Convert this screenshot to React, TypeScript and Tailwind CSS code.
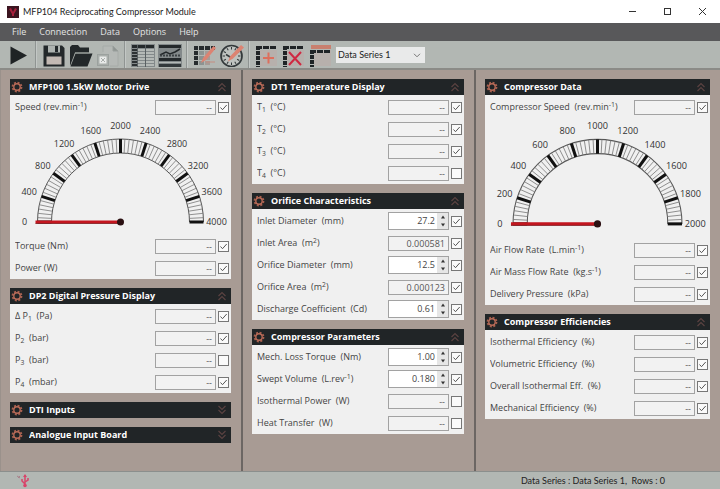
import { useId, useState } from "react";
import type { ReactNode } from "react";

const menuItems = ["File", "Connection", "Data", "Options", "Help"];

/* ---------- Toolbar icons ---------- */

function PlayIcon() {
  return (
    <svg viewBox="0 0 24 24" className="size-6">
      <path d="M3.500 3.500 20 12.500 3.500 21.500Z" fill="#1f2325" />
    </svg>
  );
}

function SaveIcon() {
  return (
    <svg viewBox="0 0 24 24" className="size-6">
      <path d="M1.500 2.500H20L22.500 5V23.500H1.500Z" fill="#23282a" />
      <rect x="6" y="2.500" width="12" height="7" fill="#aeb3b0" />
      <rect x="13" y="3" width="3" height="6" fill="#23282a" />
      <rect x="4.500" y="13.500" width="15" height="8" fill="#c3b9b3" />
    </svg>
  );
}

function OpenIcon() {
  return (
    <svg viewBox="0 0 24 24" className="size-6">
      <path d="M1 23V4L3 2H9L11 4.500H20V9.500H6Z" fill="#23282a" />
      <path d="M6.500 10.500H23.500L18.500 23.500H1.500Z" fill="#23282a" />
      <path d="M6 10H21" stroke="#9da3a0" strokeWidth="0.8" />
    </svg>
  );
}

function CloseFileIcon() {
  return (
    <svg viewBox="0 0 24 24" className="size-6">
      <path d="M7 9V3H17L22 8V23H14" fill="#b5b9b6" stroke="#a6aba8" />
      <path d="M17 3V8H22" fill="#8f9592" stroke="#989e9b" />
      <rect x="1.500" y="11.500" width="11" height="11" fill="#a9aeab" stroke="#9ba19e" />
      <rect x="3.500" y="13.500" width="7" height="7" fill="#e9ebea" />
      <path d="M5 15 9 19M9 15 5 19" stroke="#a8adaa" />
    </svg>
  );
}

function TableIcon() {
  return (
    <svg viewBox="0 0 24 24" className="size-6">
      <rect y="1" width="24" height="23" fill="#83898a" />
      <rect x="1" y="2" width="22" height="3" fill="#24292b" />
      {[6, 9, 12, 15, 18, 21].map((y) => (
        <g key={y}>
          <rect x="1" y={y} width="5" height="2" fill="#2c3133" />
          <rect x="7" y={y} width="7" height="2" fill="#b4b9b6" />
          <rect x="15" y={y} width="8" height="2" fill="#b4b9b6" />
        </g>
      ))}
      <path d="M6.500 2V24M14.500 2V24" stroke="#596062" />
    </svg>
  );
}

function ChartTableIcon() {
  return (
    <svg viewBox="0 0 24 24" className="size-6">
      <rect y="1" width="24" height="23" fill="#83898a" />
      <rect x="1" y="2" width="22" height="3" fill="#24292b" />
      <path d="M2 12 8 9 12 11 17 9 22 6" stroke="#24292b" strokeWidth="1.500" fill="none" />
      <path d="M2 12.500H22" stroke="#3c4244" strokeWidth="2" strokeDasharray="2 1" />
      <rect x="1" y="15" width="22" height="3" fill="#24292b" />
      <rect x="1" y="19" width="22" height="1" fill="#b4b9b6" />
      <rect x="1" y="21" width="22" height="3" fill="#33393b" />
    </svg>
  );
}

function EditTableIcon() {
  return (
    <svg viewBox="0 0 24 24" className="size-6">
      {[3, 8, 13, 18].map((y) => (
        <g key={y} fill="#262b2d">
          <rect x="1" y={y} width="4" height="4" />
          <rect x="6" y={y} width="5" height="4" fill={y === 3 ? "#262b2d" : "#8d9391"} />
          <rect x="12" y={y} width="5" height="4" fill={y === 3 ? "#262b2d" : "#a59b96"} />
        </g>
      ))}
      <rect x="18" y="3" width="4" height="4" fill="#262b2d" />
      <path d="M20.500 3 23 5 13 17 8 20 10 15Z" fill="#dc8372" />
      <path d="M13 19H22" stroke="#c68d80" />
    </svg>
  );
}

function ClockIcon() {
  return (
    <svg viewBox="0 0 26 24" className="h-6 w-[26px]">
      <circle cx="12.500" cy="13" r="10.500" fill="#bec2bf" stroke="#33393b" strokeWidth="1.700" />
      {[0, 30, 60, 90, 120, 150, 180, 210, 240, 270, 300, 330].map((a) => (
        <path key={a} d="M12.500 4V6.500" stroke="#33393b" transform={`rotate(${a} 12.500 13)`} />
      ))}
      <path d="M7 11.500 12 14.500" stroke="#33393b" strokeWidth="1.500" />
      <path d="M22 2 25 4.500 14 15.500 9 18.500 11 13.500Z" fill="#dc8372" />
    </svg>
  );
}

function SeriesFrame({ top = 3, children }: { top?: number; children?: ReactNode }) {
  return (
    <svg viewBox="0 0 24 24" className="size-6">
      <rect x="5" y="7" width="17" height="16" fill="#b7b0ac" />
      <path d={`M1 ${top + 1.5}H22`} stroke="#1f2426" strokeWidth="3" strokeDasharray="6 1" />
      <path d={`M3 ${top}V24`} stroke="#1f2426" strokeWidth="4" strokeDasharray="4 1" />
      {children}
    </svg>
  );
}

/* ---------- Small parts ---------- */

function GearIcon() {
  return (
    <svg viewBox="0 0 12 12" className="size-3">
      <circle cx="6" cy="6" r="4.500" fill="none" stroke="#a8604f" strokeWidth="1.800" strokeDasharray="2 1.530" />
      <circle cx="6" cy="6" r="3.200" fill="none" stroke="#b96b58" strokeWidth="1.400" />
    </svg>
  );
}

function Check({ label, on }: { label: string; on: boolean }) {
  const [checked, setChecked] = useState(on);

  return (
    <span className="relative flex size-[11px] shrink-0">
      <input
        type="checkbox"
        aria-label={label}
        checked={checked}
        onChange={() => setChecked(!checked)}
        className="size-[11px] appearance-none border border-[#777] bg-[#fafafa]"
      />
      {checked && (
        <svg viewBox="0 0 11 11" className="pointer-events-none absolute inset-0 size-[11px]">
          <path d="M2.500 5.500 4.500 7.700 8.700 3" fill="none" stroke="#555" />
        </svg>
      )}
    </span>
  );
}

interface RowProps {
  label: ReactNode;
  name: string;
  value?: string;
  on?: boolean;
  step?: number;
}

function Row({ label, name, value = "--", on = true, step }: RowProps) {
  const id = useId();
  const [text, setText] = useState(value);

  // Keeps the number of decimals of the initial value
  const change = (direction: number) => {
    const decimals = value.split(".")[1]?.length ?? 0;
    setText((Number(text) + direction * (step ?? 0)).toFixed(decimals));
  };

  return (
    <div className="flex h-[22px] items-center gap-0.5 pr-0.5 pl-[5px]">
      <label htmlFor={id} className="flex-1 truncate leading-5 text-[#444]">
        {label}
      </label>
      {step ? (
        <div className="flex h-[18px] w-[61px] border border-[#a2a2a2] bg-white">
          <input
            id={id}
            value={text}
            onChange={(e) => setText(e.target.value)}
            className="min-w-0 flex-1 bg-transparent pr-0.5 text-right text-[#444] outline-none"
          />
          <div className="flex w-[11px] flex-col bg-[#e6e6e6]">
            <button aria-label={`Increase ${name}`} onClick={() => change(1)} className="flex flex-1 items-center justify-center">
              <svg viewBox="0 0 6 4" className="h-1 w-1.5">
                <path d="M3 .5 5 3.500H1Z" fill="#333" />
              </svg>
            </button>
            <button aria-label={`Decrease ${name}`} onClick={() => change(-1)} className="flex flex-1 items-center justify-center">
              <svg viewBox="0 0 6 4" className="h-1 w-1.5">
                <path d="M3 3.500 5 .5H1Z" fill="#333" />
              </svg>
            </button>
          </div>
        </div>
      ) : (
        <input
          id={id}
          readOnly
          value={text}
          className="h-[15px] w-[61px] border border-[#a2a2a2] bg-[#f2f2f2] pr-[3px] text-right text-[#555] outline-none"
        />
      )}
      <Check label={`Log ${name}`} on={on} />
    </div>
  );
}

function Panel({ title, defaultOpen = true, children }: { title: string; defaultOpen?: boolean; children?: ReactNode }) {
  const [open, setOpen] = useState(defaultOpen);

  return (
    <section>
      <button
        onClick={() => setOpen(!open)}
        aria-expanded={open}
        className="flex h-4 w-full items-center gap-1.5 bg-[#212527] pr-1 pl-px text-left font-bold text-white"
      >
        <GearIcon />
        <span className="flex-1 truncate">{title}</span>
        <svg viewBox="0 0 10 10" className={open ? "size-2.5" : "size-2.5 rotate-180"}>
          <path d="M1.500 5 5 1.500 8.500 5M1.500 9 5 5.500 8.500 9" fill="none" stroke="#5a4241" strokeWidth="1.200" />
        </svg>
      </button>
      {open && children && <div className="bg-[#f0f0f0] pt-px">{children}</div>}
    </section>
  );
}

// Half circle dial, zero on the left and full scale on the right
function Gauge({ max }: { max: number }) {
  const cx = 110.5;
  const cy = 104;
  const outer = 83;
  const inner = 69;
  const point = (r: number, part: number) => {
    const a = Math.PI * (1 - part);
    return [cx + r * Math.cos(a), cy - r * Math.sin(a)];
  };
  const ticks = Array.from({ length: 61 }, (_, i) => i);
  const labels = Array.from({ length: 11 }, (_, i) => i);

  return (
    <svg viewBox="0 0 221 117" className="block h-auto w-full">
      <path d={`M${cx - outer} ${cy}A${outer} ${outer} 0 0 1 ${cx + outer} ${cy}`} fill="none" stroke="#555" />
      <path d={`M${cx - inner} ${cy}A${inner} ${inner} 0 0 1 ${cx + inner} ${cy}`} fill="none" stroke="#555" />
      {ticks.map((i) => {
        const [x1, y1] = point(outer, i / 60);
        const [x2, y2] = point(inner, i / 60);
        const major = i % 6 === 0;
        return (
          <line key={i} x1={x1} y1={y1} x2={x2} y2={y2} stroke={major ? "#111" : "#777"} strokeWidth={major ? 3 : 0.8} />
        );
      })}
      {labels.map((i) => {
        const [x, y] = point(96, i / 10);
        return (
          <text key={i} x={x} y={y + 3} textAnchor="middle" fontSize="9" fill="#333">
            {(max / 10) * i}
          </text>
        );
      })}
      <line x1={cx - outer - 2} y1={cy} x2={cx} y2={cy} stroke="#c4161f" strokeWidth="3" />
      <line x1={cx - outer - 2} y1={cy + 1.5} x2={cx} y2={cy + 1.5} stroke="#7d1a20" strokeWidth="0.8" />
      <circle cx={cx} cy={cy} r="3.500" fill="#2b1012" />
    </svg>
  );
}

const perMinute = <sup className="text-[7px]">-1</sup>;

export default function App() {
  const [series, setSeries] = useState("Data Series 1");

  const toolGroups = [
    [{ name: "Start", icon: <PlayIcon /> }],
    [
      { name: "Save", icon: <SaveIcon /> },
      { name: "Open", icon: <OpenIcon /> },
      { name: "Close file", icon: <CloseFileIcon /> },
    ],
    [
      { name: "Table", icon: <TableIcon /> },
      { name: "Chart", icon: <ChartTableIcon /> },
    ],
    [
      { name: "Record row", icon: <EditTableIcon /> },
      { name: "Timed recording", icon: <ClockIcon /> },
    ],
    [
      {
        name: "Add series",
        icon: (
          <SeriesFrame>
            <path d="M8 15H19M13.500 9.500V20.500" stroke="#dd6f5d" strokeWidth="2" />
          </SeriesFrame>
        ),
      },
      {
        name: "Delete series",
        icon: (
          <SeriesFrame>
            <path d="M7 9 19 22M19 9 7 22" stroke="#cf2942" strokeWidth="2" />
          </SeriesFrame>
        ),
      },
      {
        name: "Rename series",
        icon: (
          <SeriesFrame top={7}>
            <rect x="2" y="2" width="20" height="4" fill="#c9806f" />
          </SeriesFrame>
        ),
      },
    ],
  ];

  return (
    <div className="flex min-h-screen flex-col bg-[#a89b94] font-['Open_Sans','Noto_Sans',sans-serif] text-[9px]">
      <header className="flex h-[23px] items-center bg-white pr-[13px] pl-[7px] font-['Lato','Open_Sans',sans-serif] text-[#222]">
        <svg viewBox="0 0 12 12" className="size-3">
          <rect width="12" height="12" fill="#3b1520" />
          <path d="M2 3 4 2 6 6 8 2 10 3 7 8V10H5V8Z" fill="#a51f3b" />
        </svg>
        <h1 className="flex-1 pl-1">MFP104 Reciprocating Compressor Module</h1>
        <div className="flex gap-[26px]">
          <button aria-label="Minimize">
            <svg viewBox="0 0 9 9" className="size-[9px]">
              <path d="M1 4.500H8" stroke="#333" />
            </svg>
          </button>
          <button aria-label="Maximize">
            <svg viewBox="0 0 9 9" className="size-[9px]">
              <rect x="1.500" y="1.500" width="6" height="6" fill="none" stroke="#333" />
            </svg>
          </button>
          <button aria-label="Close">
            <svg viewBox="0 0 9 9" className="size-[9px]">
              <path d="M1 1 8 8M8 1 1 8" stroke="#333" />
            </svg>
          </button>
        </div>
      </header>

      <nav className="flex h-[18px] items-center gap-[13px] bg-[#58585a] pl-3 text-[#e4e4e4]">
        {menuItems.map((item) => (
          <button key={item}>{item}</button>
        ))}
      </nav>

      <div className="flex h-[29px] items-center border-b-2 border-[#8b8b87] bg-[#b2b7b3] pl-[5px]">
        {toolGroups.map((group, i) => (
          <div key={i} className="flex items-center">
            {i > 0 && <div className="mx-[3px] h-[27px] w-0.5 border-l border-[#8f9492] bg-[#c3c7c5]" />}
            {group.map((tool) => (
              <button key={tool.name} aria-label={tool.name} className="flex w-[27px] justify-center">
                {tool.icon}
              </button>
            ))}
          </div>
        ))}
        <div className="relative ml-0.5">
          <select
            aria-label="Data series"
            value={series}
            onChange={(e) => setSeries(e.target.value)}
            className="block h-4 w-[89px] appearance-none bg-[#e9eaea] pl-0.5 font-['Lato','Open_Sans',sans-serif] text-[#222] outline-none"
          >
            <option>Data Series 1</option>
          </select>
          <svg viewBox="0 0 8 5" className="pointer-events-none absolute top-1.5 right-1 h-[5px] w-2">
            <path d="M1 .8 4 3.800 7 .8" fill="none" stroke="#777" />
          </svg>
        </div>
      </div>

      <main className="grid flex-1 grid-cols-[240fr_235fr_244fr] border-l border-[#9a918b]">
        <div className="flex min-w-0 flex-col gap-[9px] pt-[9px] pr-2.5 pl-[9px]">
          <Panel title="MFP100 1.5kW Motor Drive">
            <Row name="speed" label={<>Speed (rev.min{perMinute})</>} />
            <Gauge max={4000} />
            <Row name="torque" label="Torque (Nm)" />
            <Row name="power" label="Power (W)" />
          </Panel>
          <Panel title="DP2 Digital Pressure Display">
            <Row name="P1" label={<>Δ P<sub>1</sub>&nbsp; (Pa)</>} />
            <Row name="P2" label={<>P<sub>2</sub>&nbsp; (bar)</>} />
            <Row name="P3" label={<>P<sub>3</sub>&nbsp; (bar)</>} on={false} />
            <Row name="P4" label={<>P<sub>4</sub>&nbsp; (mbar)</>} />
          </Panel>
          <Panel title="DTI Inputs" defaultOpen={false} />
          <Panel title="Analogue Input Board" defaultOpen={false} />
        </div>

        <div className="flex min-w-0 flex-col gap-[9px] border-x-2 border-[#6c6663] pt-[9px] pr-2.5 pl-[9px]">
          <Panel title="DT1 Temperature Display">
            <Row name="T1" label={<>T<sub>1</sub>&nbsp; (°C)</>} />
            <Row name="T2" label={<>T<sub>2</sub>&nbsp; (°C)</>} />
            <Row name="T3" label={<>T<sub>3</sub>&nbsp; (°C)</>} />
            <Row name="T4" label={<>T<sub>4</sub>&nbsp; (°C)</>} on={false} />
          </Panel>
          <Panel title="Orifice Characteristics">
            <Row name="inlet diameter" label={<>Inlet Diameter&nbsp; (mm)</>} value="27.2" step={0.1} />
            <Row name="inlet area" label={<>Inlet Area&nbsp; (m<sup>2</sup>)</>} value="0.000581" />
            <Row name="orifice diameter" label={<>Orifice Diameter&nbsp; (mm)</>} value="12.5" step={0.1} />
            <Row name="orifice area" label={<>Orifice Area&nbsp; (m<sup>2</sup>)</>} value="0.000123" />
            <Row name="discharge coefficient" label={<>Discharge Coefficient&nbsp; (Cd)</>} value="0.61" step={0.01} />
          </Panel>
          <Panel title="Compressor Parameters">
            <Row name="mechanical loss torque" label={<>Mech. Loss Torque&nbsp; (Nm)</>} value="1.00" step={0.01} />
            <Row name="swept volume" label={<>Swept Volume&nbsp; (L.rev{perMinute})</>} value="0.180" step={0.001} />
            <Row name="isothermal power" label={<>Isothermal Power&nbsp; (W)</>} on={false} />
            <Row name="heat transfer" label={<>Heat Transfer&nbsp; (W)</>} on={false} />
          </Panel>
        </div>

        <div className="flex min-w-0 flex-col gap-[9px] pt-[9px] pr-2.5 pl-[9px]">
          <Panel title="Compressor Data">
            <Row name="compressor speed" label={<>Compressor Speed&nbsp; (rev.min{perMinute})</>} />
            <div className="pb-0.5">
              <Gauge max={2000} />
            </div>
            <Row name="air flow rate" label={<>Air Flow Rate&nbsp; (L.min{perMinute})</>} />
            <Row name="air mass flow rate" label={<>Air Mass Flow Rate&nbsp; (kg.s{perMinute})</>} />
            <Row name="delivery pressure" label={<>Delivery Pressure&nbsp; (kPa)</>} />
          </Panel>
          <Panel title="Compressor Efficiencies">
            <Row name="isothermal efficiency" label={<>Isothermal Efficiency&nbsp; (%)</>} />
            <Row name="volumetric efficiency" label={<>Volumetric Efficiency&nbsp; (%)</>} />
            <Row name="overall isothermal efficiency" label={<>Overall Isothermal Eff.&nbsp; (%)</>} />
            <Row name="mechanical efficiency" label={<>Mechanical Efficiency&nbsp; (%)</>} />
          </Panel>
        </div>
      </main>

      <footer className="flex h-[18px] items-center justify-between border-t border-[#8b8f8d] bg-[#b2b7b3] pr-[55px] pl-4 font-['Lato','Open_Sans',sans-serif] text-[#222]">
        <svg viewBox="0 0 14 14" className="size-3.5">
          <path d="M1 2 4 4M4 2 2 4" stroke="#a9808a" />
          <path d="M9 1V13M9 10 6 7V5M9 8 12 6V4" fill="none" stroke="#d8446a" strokeWidth="1.500" />
          <circle cx="9" cy="11.500" r="1.800" fill="#d8446a" />
          <path d="M7 3 9 0 11 3Z" fill="#d8446a" />
        </svg>
        <span>Data Series : Data Series 1,&nbsp; Rows : 0</span>
      </footer>
    </div>
  );
}
